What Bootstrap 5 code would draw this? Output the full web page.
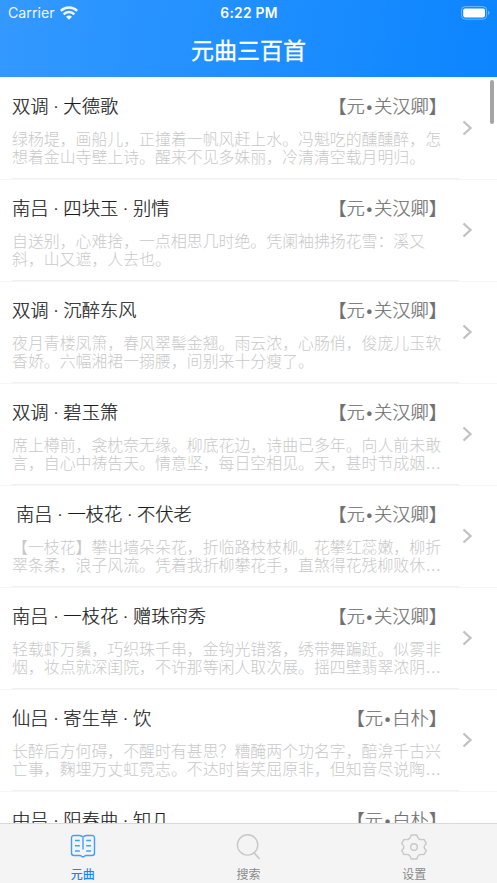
<!DOCTYPE html>
<html lang="zh-CN">
<head>
<meta charset="utf-8">
<meta name="viewport" content="width=device-width, initial-scale=1">
<title>元曲三百首</title>
<link href="https://cdn.jsdelivr.net/npm/bootstrap@5.3.0/dist/css/bootstrap.min.css" rel="stylesheet">
<style>
html,body{height:100%}
body{font-family:"Noto Sans CJK SC",sans-serif;background:#fff}
.screen{height:883px;width:497px}
.top-bar{height:77px;background:linear-gradient(100deg,#3399ff,#0c85ff);color:#fff}
.status{height:26px;padding:0 7px 0 8px;font:14.2px/26px Inter,sans-serif}
.status>div{flex:1 1 0}
.carrier{font-weight:400;opacity:.93}
.wifi{margin-left:5px}
.clock{font-weight:600;font-size:13.8px;letter-spacing:.25px}
.app-title{font-size:23px;line-height:46px;font-weight:400;-webkit-text-stroke:.3px #fff}
.poems{min-height:0}
.poem{height:102px;flex:none;padding:0 24px 0 12px;border:0;border-bottom:1px solid #f6f6f6;border-radius:0;background:linear-gradient(#f1f1f1,#f1f1f1) 12px 100%/447px 1px no-repeat}
.poem:first-child{height:103px}
.poem-body{width:435px;padding-top:15px}
.poem:first-child .poem-body{padding-top:16px}
.poem-head{height:24px;line-height:24px;font-size:18.3px;font-weight:300}
.poem-name{color:#1c1c1c;white-space:pre;-webkit-text-stroke:.2px #1c1c1c}
.poet{color:#707070;-webkit-text-stroke:.2px #707070}
.dot{display:inline-block;width:14.8px;text-align:center;font-family:"Noto Sans",sans-serif}
.bullet{display:inline-block;width:9px;text-align:center;font-family:"Liberation Sans",sans-serif;font-size:16px}
.excerpt{margin-top:13px;font-size:15.9px;line-height:18.3px;font-weight:300;color:#c9c9c9;white-space:nowrap}
.dots{font-family:"Liberation Sans",sans-serif}
.chevron{margin-bottom:1px}
.tabs{height:60px;background:#f4f4f4;border-top:1px solid #d9d9d9}
.tab{color:#8a8a8a;font-size:12px;line-height:16px;padding-top:10px}
.tab svg{display:block;margin-bottom:6px;stroke:#c8c8c8;fill:none;stroke-width:1.4}
.tab-on{color:#1688ff;font-weight:500}
.tab-on svg{stroke:#3f9fff}
.scroll-thumb{top:80px;right:3px;width:4px;height:44px;border-radius:2px;background:#a5a5a5}
</style>
</head>
<body>
<div class="screen d-flex flex-column position-relative overflow-hidden">
<header class="top-bar flex-shrink-0">
  <div class="status d-flex align-items-center">
    <div class="carrier d-flex align-items-center">Carrier
      <svg class="wifi" width="18" height="14" viewBox="0 0 18 14" fill="none" stroke="#fff" stroke-width="2.5"><path d="M.8 4.900a11.700 11.700 0 0 1 16.400 0M3.600 8.300a7.700 7.700 0 0 1 10.800 0"/><path fill="#fff" stroke="none" d="M6 10.700a4.600 4.600 0 0 1 6 0L9 13.700z"/></svg></div>
    <div class="clock text-center">6:22 PM</div>
    <div class="d-flex justify-content-end"><svg width="29" height="14" viewBox="0 0 29 14"><rect x=".6" y=".6" width="25" height="12.600" rx="3.600" fill="none" stroke="#fff" stroke-opacity=".4"/><rect x="2.200" y="2.400" width="21.800" height="9" rx="1.800" fill="#fff"/><path d="M27.200 4.800c1.600.6 1.600 3.600 0 4.200z" fill="#fff" fill-opacity=".5"/></svg></div>
  </div>
  <h1 class="app-title text-center m-0">元曲三百首</h1>
</header>
<main class="poems list-group list-group-flush flex-grow-1 overflow-hidden" id="poems"></main>
<nav class="tabs d-flex flex-shrink-0">
  <a class="tab tab-on col-4 d-flex flex-column align-items-center text-decoration-none"><svg width="26" height="26" viewBox="0 0 26 26"><path d="M13 4V15.500M13 3.500Q12 1.500 9.500 1.500H4Q1.500 1.500 1.500 4V19Q1.500 21.500 4 21.500H9.500Q11 21.500 11.500 22.200Q13 23.500 14.500 22.200Q15 21.500 16.500 21.500H22Q24.500 21.500 24.500 19V4Q24.500 1.500 22 1.500H16.500Q14 1.500 13 3.500M5 6.500H9.800M5 11.800H9.800M5 17H9.800M16.200 6.500H21M16.200 11.800H21M16.200 17H21"/></svg>元曲</a>
  <a class="tab col-4 d-flex flex-column align-items-center text-decoration-none"><svg width="26" height="26" viewBox="0 0 26 26"><circle cx="12.600" cy="10.900" r="10.200"/><path d="M19.300 19L24.600 25" stroke-width="1.700"/></svg>搜索</a>
  <a class="tab col-4 d-flex flex-column align-items-center text-decoration-none"><svg width="26" height="26" viewBox="0 0 26 26"><path d="M10.200 1H15.800C17 5.400 18.500 6.200 23 5.400L25.300 9.400C22.300 12.300 22.300 13.700 25.300 16.600L23 20.600C18.500 19.800 17 20.600 15.800 25H10.200C9 20.600 7.500 19.800 3 20.600L.7 16.600C3.700 13.700 3.700 12.300 .7 9.400L3 5.400C7.500 6.200 9 5.400 10.200 1Z" stroke-linejoin="round"/><circle cx="13" cy="13" r="3.300"/></svg>设置</a>
</nav>
<div class="scroll-thumb position-absolute"></div>
</div>
<script>
const poems = [
 ["双调·大德歌","关汉卿","绿杨堤，画船儿，正撞着一帆风赶上水。冯魁吃的醺醺醉，怎","想着金山寺壁上诗。醒来不见多姝丽，冷清清空载月明归。"],
 ["南吕·四块玉·别情","关汉卿","自送别，心难捨，一点相思几时绝。凭阑袖拂扬花雪：溪又","斜，山又遮，人去也。"],
 ["双调·沉醉东风","关汉卿","夜月青楼凤箫，春风翠髻金翘。雨云浓，心肠俏，俊庞儿玉软","香娇。六幅湘裙一搦腰，间别来十分瘦了。"],
 ["双调·碧玉箫","关汉卿","席上樽前，衾枕奈无缘。柳底花边，诗曲已多年。向人前未敢","言，自心中祷告天。情意坚，每日空相见。天，甚时节成姻…"],
 [" 南吕·一枝花·不伏老","关汉卿","【一枝花】攀出墙朵朵花，折临路枝枝柳。花攀红蕊嫩，柳折","翠条柔，浪子风流。凭着我折柳攀花手，直煞得花残柳败休…"],
 ["南吕·一枝花·赠珠帘秀","关汉卿","轻载虾万鬚，巧织珠千串，金钩光错落，绣带舞蹁跹。似雾非","烟，妆点就深闺院，不许那等闲人取次展。摇四壁翡翠浓阴…"],
 ["仙吕·寄生草·饮","白朴","长醉后方何碍，不醒时有甚思？糟醃两个功名字，醅渰千古兴","亡事，麴埋万丈虹霓志。不达时皆笑屈原非，但知音尽说陶…"],
 ["中吕·阳春曲·知几","白朴","知荣知辱牢缄口，谁是谁非暗点头。诗书丛里且淹留。","闲袖手，贫煞也风流。"]
];
document.getElementById("poems").innerHTML = poems.map(([name, poet, a, b]) => `
<article class="poem list-group-item d-flex justify-content-between">
  <div class="poem-body">
    <div class="poem-head d-flex justify-content-between">
      <span class="poem-name">${name.replace(/·/g, '<span class="dot">·</span>')}</span>
      <span class="poet">【元<span class="bullet">•</span>${poet}】</span>
    </div>
    <div class="excerpt">${a}<br>${b.replace("…", '<span class="dots">…</span>')}</div>
  </div>
  <svg class="chevron align-self-center" width="11" height="16" viewBox="0 0 11 16" fill="none" stroke="#c2c2c4" stroke-width="2.300"><path d="M1.500 1.500L8.500 8L1.500 14.500"/></svg>
</article>`).join("");
</script>
<script src="https://cdn.jsdelivr.net/npm/bootstrap@5.3.0/dist/js/bootstrap.bundle.min.js"></script>
</body>
</html>
